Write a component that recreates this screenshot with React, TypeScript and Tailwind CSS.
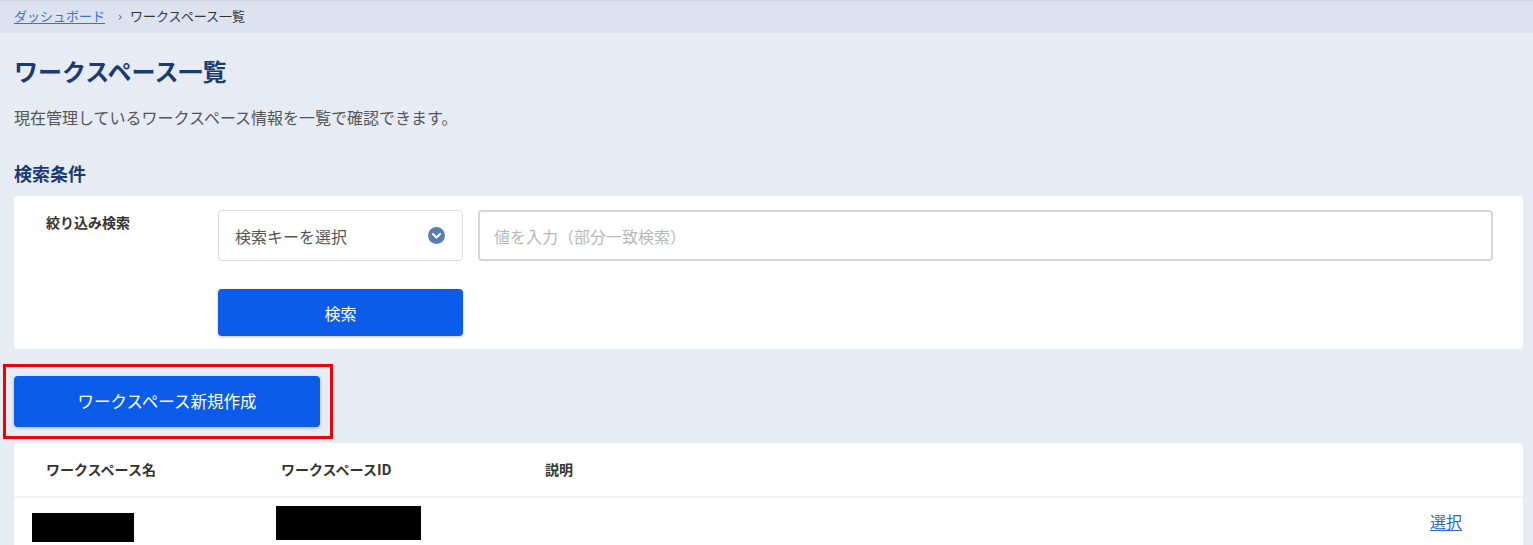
import React from 'react';

const font = { fontFamily: '"Noto Sans CJK JP", "Noto Sans", sans-serif' };

const ChevronCircle: React.FC = () => (
  <svg width="17" height="17" viewBox="0 0 20 20">
    <circle cx="10" cy="10" r="10" fill="#5b7db5" />
    <path d="M5.8 8.3 L10 12.3 L14.2 8.3" fill="none" stroke="#fff" strokeWidth="2.4" strokeLinecap="round" strokeLinejoin="round" />
  </svg>
);

const App: React.FC = () => {
  return (
    <div className="w-[1533px] h-[545px] overflow-hidden bg-[#e7ebf4] text-[#333]" style={font}>
      {/* breadcrumb */}
      <div className="h-[33px] bg-[#dce2ee] border-t border-[#cfd6e4] flex items-center pl-[14px] pb-[3px] text-[13px]">
        <a className="text-[#3c6fd6] underline underline-offset-2">ダッシュボード</a>
        <span className="ml-[13px] mr-[8px] text-[#666] text-[13px]">›</span>
        <span className="text-[#333]">ワークスペース一覧</span>
      </div>

      <div className="pl-[14px] pr-[10px]">
        <h1 className="mt-[19px] text-[24px] leading-[38px] font-bold text-[#1b3a70]">ワークスペース一覧</h1>
        <p className="mt-[15px] text-[16px] leading-[24px] text-[#555]">現在管理しているワークスペース情報を一覧で確認できます。</p>

        <h2 className="mt-[32px] text-[18px] leading-[24px] font-bold text-[#1b3a70]">検索条件</h2>

        {/* search card */}
        <div className="mt-[11px] bg-white rounded-[4px] h-[153px] flex pt-[14px]">
          <div className="w-[204px] pl-[32px] pt-[2px] text-[14px] font-bold text-[#333]">絞り込み検索</div>
          <div className="flex flex-col">
            <div className="flex gap-[15px]">
              <div className="w-[245px] h-[51px] border border-[#dcdcdc] rounded-[4px] flex items-center justify-between pl-[16px] pr-[17px]">
                <span className="text-[16px] text-[#555]">検索キーを選択</span>
                <ChevronCircle />
              </div>
              <div className="w-[1015px] h-[51px] border-2 border-[#d6d6d6] rounded-[4px] flex items-center pl-[14px]">
                <span className="text-[16px] text-[#b8b8b8]">値を入力（部分一致検索）</span>
              </div>
            </div>
            <button className="mt-[28px] w-[245px] h-[47px] bg-[#0b5ce8] rounded-[4px] shadow-[0_1px_3px_rgba(0,0,0,0.25)] text-white text-[16px]">
              検索
            </button>
          </div>
        </div>

        {/* create button with highlight */}
        <div className="mt-[15px] -ml-[11px] w-[330px] h-[75px] border-[3px] border-[#f00000] flex items-center pl-[8px]">
          <button className="w-[306px] h-[51px] bg-[#0b5ce8] rounded-[4px] shadow-[0_1px_3px_rgba(0,0,0,0.25)] text-white text-[16.5px]">
            ワークスペース新規作成
          </button>
        </div>

        {/* table */}
        <div className="mt-[4px] bg-white rounded-t-[4px]">
          <div className="h-[55px] flex items-center border-b-2 border-[#f1f3f7] text-[14px] font-bold text-[#333]">
            <div className="w-[267px] pl-[32px]">ワークスペース名</div>
            <div className="w-[264px]">ワークスペースID</div>
            <div>説明</div>
          </div>
          <div className="h-[60px] flex items-start">
            <div className="w-[262px] pl-[18px] pt-[15px]">
              <div className="w-[102px] h-[29px] bg-black" />
            </div>
            <div className="pt-[8px]">
              <div className="w-[145px] h-[34px] bg-black" />
            </div>
            <div className="flex-1" />
            <a className="mr-[61px] mt-[11px] text-[16px] text-[#2a64d8] underline underline-offset-2">選択</a>
          </div>
        </div>
      </div>
    </div>
  );
};

export default App;
